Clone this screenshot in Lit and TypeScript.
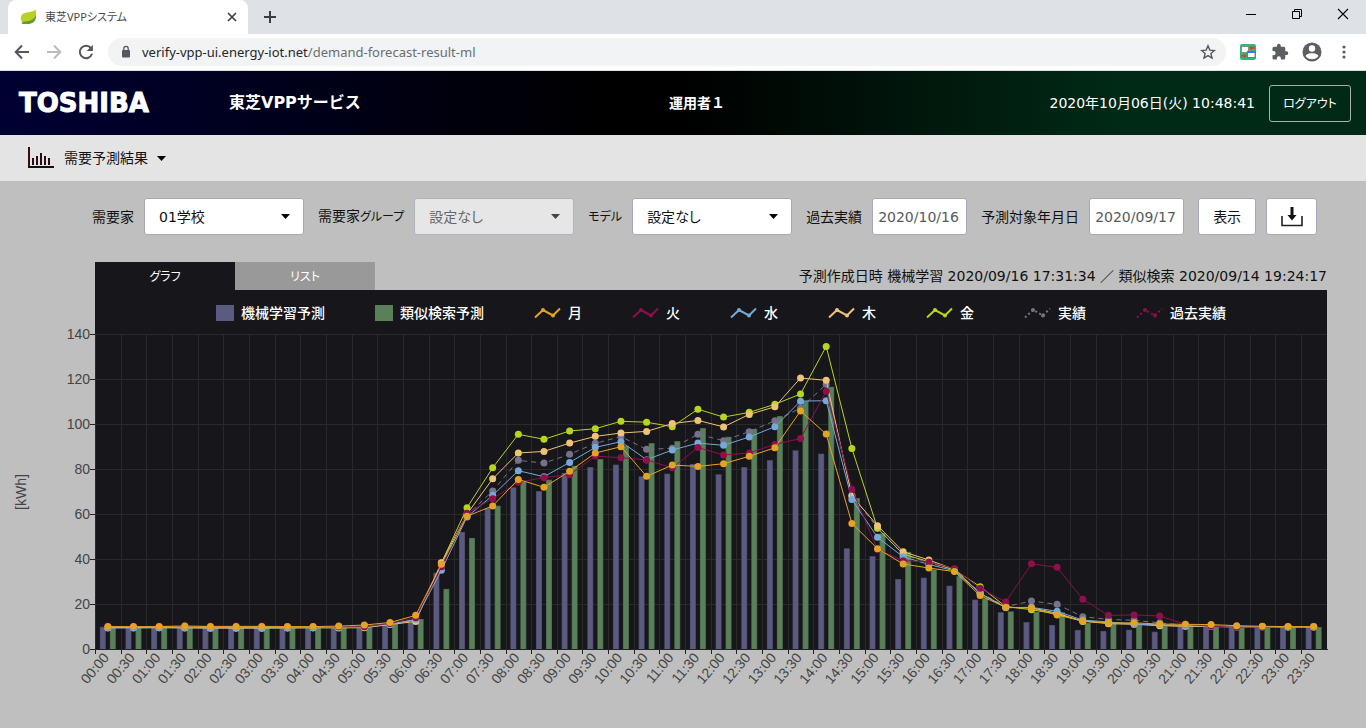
import { LitElement, html, svg, css } from "lit";
import { customElement } from "lit/decorators.js";

const ML = [
  9.9, 9.8, 9.8, 9.8, 9.7, 9.7, 9.6, 9.6, 9.6, 9.7, 9.9, 10.9, 12, 34, 52.2, 62.9, 72.1, 70.4, 78.5, 81.1, 82.2, 77,
  78.2, 82.5, 77.9, 81.1, 84.2, 88.6, 87.1, 44.9, 41.4, 31.2, 31.8, 28.2, 22, 16.4, 12, 10.7, 8.5, 8, 8.6, 7.7, 10.1,
  10, 9.9, 9.8, 9.8, 9.8,
];
const SIMILAR = [
  9.6, 9.6, 9.6, 9.5, 9.5, 9.5, 9.5, 9.5, 9.5, 9.6, 9.9, 11.3, 13.4, 26.8, 49.5, 63.9, 74.9, 75.5, 81.7, 84.7, 90.6,
  91.8, 92.7, 98.5, 94.6, 98.1, 103.9, 110.5, 116.9, 67.3, 51.6, 43.3, 35.5, 32.5, 22.6, 16.8, 16.6, 16.4, 11.6, 11.3,
  10.7, 10.1, 9.8, 9.8, 9.8, 9.7, 9.7, 9.8,
];
const ACTUAL = [
  9.8, 9.8, 9.8, 9.8, 9.7, 9.7, 9.7, 9.7, 9.7, 9.7, 10, 11.2, 13, 37, 59.7, 70.4, 84.1, 82.9, 86.8, 91.7, 94.7, 89,
  89.5, 95.7, 92.9, 96.9, 101.8, 107.3, 118, 68.6, 54, 42, 38.5, 35.3, 25.2, 18.9, 21.4, 19.9, 14.4, 13.2, 12.8, 11.7,
  10.5, 10.2, 10, 10, 10, 10,
];
const FRI = [
  9.6, 9.6, 9.6, 9.6, 9.5, 9.5, 9.5, 9.5, 9.5, 9.6, 9.8, 11.2, 12.9, 38.3, 63, 80.8, 95.7, 93.5, 97.2, 98.2, 101.5,
  101.1, 99.1, 106.9, 103.4, 105.5, 109.1, 113.7, 134.9, 89.4, 53.8, 42.3, 38.9, 35.2, 27.8, 18.9, 17.5, 15.5, 12.3,
  11.7, 11.3, 10.6, 10.3, 10.2, 9.9, 9.9, 9.9, 9.9,
];
const THU = [
  9.5, 9.5, 9.5, 9.4, 9.3, 9.3, 9.3, 9.4, 9.5, 9.4, 9.5, 10.9, 12.3, 38.5, 60.2, 75.9, 87.4, 88.1, 91.8, 94.8, 96.3,
  97, 100.5, 101.9, 99, 104.6, 108, 120.8, 119.8, 68.2, 55, 43.4, 39.7, 35.5, 24.8, 18.6, 18.4, 15.9, 12.5, 11.3, 11,
  10.4, 10.1, 10, 9.9, 9.9, 9.8, 9.8,
];
const WED = [
  9.4, 9.4, 9.5, 9.5, 9.5, 9.5, 9.4, 9.5, 9.5, 9.6, 9.8, 11, 13.2, 35.1, 58.9, 68.5, 79.5, 76.8, 83.2, 89.9, 92.4,
  84.4, 88.7, 91.8, 90.8, 94.5, 99.1, 110.5, 110.7, 66.6, 49.8, 41.1, 37.7, 34.8, 24.8, 18.4, 18.6, 16.8, 12.9, 12.1,
  11, 10.8, 10.3, 10.2, 9.7, 9.9, 9.8, 9.8,
];
const TUE = [
  10.1, 10, 10.1, 10.4, 10.2, 10.3, 10.3, 10, 10, 9.9, 9.9, 11.4, 13.9, 36.7, 60.5, 67, 74.3, 76.4, 77.7, 86, 85.3,
  84.3, 80.8, 89.8, 86.5, 87.4, 91.2, 93.8, 114.9, 71.2, 44.4, 39.4, 38.8, 35.8, 27.1, 21, 38, 36.4, 22.2, 15, 15.2,
  14.7, 11, 10.1, 9.7, 9.8, 10, 10,
];
const MON = [
  10, 10, 10, 10.2, 10, 10, 10, 10, 10, 10.2, 10.7, 11.8, 15, 37.8, 59.2, 63.8, 75.6, 72.1, 79.2, 87.4, 90.2, 77, 82,
  81.4, 82.6, 85.9, 89.7, 106.1, 95.8, 56, 44.7, 37.9, 36.1, 34.5, 23.8, 18.6, 18.3, 15.2, 12.5, 11.6, 11.7, 11.1, 11,
  10.9, 10.4, 10.1, 10, 10,
];

interface Series {
  color: string;
  values: number[];
  dashed?: boolean;
}

const SERIES: Series[] = [
  { color: "#75728a", values: ACTUAL, dashed: true },
  { color: "#b7d51c", values: FRI },
  { color: "#efc377", values: THU },
  { color: "#74a9d8", values: WED },
  { color: "#8f0f4b", values: TUE },
  { color: "#e3a424", values: MON },
];

const LEGEND = [
  { label: "機械学習予測", color: "#5b5a80", kind: "bar" },
  { label: "類似検索予測", color: "#5a8059", kind: "bar" },
  { label: "月", color: "#e3a424", kind: "line" },
  { label: "火", color: "#8f0f4b", kind: "line" },
  { label: "水", color: "#74a9d8", kind: "line" },
  { label: "木", color: "#efc377", kind: "line" },
  { label: "金", color: "#b7d51c", kind: "line" },
  { label: "実績", color: "#75728a", kind: "dash" },
  { label: "過去実績", color: "#8f0f4b", kind: "dash" },
];

/* Shared text stack */
const FONT = css`"DejaVu Sans", "Noto Sans CJK JP", sans-serif`;

@customElement("browser-chrome")
export class BrowserChrome extends LitElement {
  static styles = css`
    :host {
      display: block;
      font-family: "Noto Sans", "Noto Sans CJK JP", sans-serif;
    }
    button {
      border: 0;
      padding: 0;
      margin: 0;
      background: none;
      display: grid;
      place-items: center;
      font: inherit;
    }
    svg {
      display: block;
    }
    .strip {
      display: flex;
      align-items: stretch;
      height: 34px;
      padding-left: 8px;
      background: #dee1e6;
    }
    .tab {
      display: flex;
      align-items: center;
      box-sizing: border-box;
      width: 240px;
      padding: 0 10px 0 12px;
      gap: 8px;
      background: #fff;
      border-radius: 8px 8px 0 0;
      font-size: 11px;
      color: #45484c;
    }
    .tab-title {
      flex: 1;
      font-feature-settings: "palt";
      white-space: nowrap;
    }
    .new {
      width: 44px;
    }
    .window {
      display: flex;
      margin-left: auto;
    }
    .window button {
      width: 46px;
      padding-bottom: 6px;
    }
    .bar {
      display: flex;
      align-items: center;
      height: 36px;
      background: #fff;
      border-bottom: 1px solid #dcdee2;
    }
    .nav {
      display: flex;
      flex: none;
      padding: 0 6px;
    }
    .nav button {
      width: 32px;
    }
    .url {
      display: flex;
      align-items: center;
      flex: 1;
      height: 28px;
      padding: 0 10px 0 12px;
      border-radius: 14px;
      background: #f1f3f4;
      gap: 10px;
      font-size: 13px;
      color: #6b6e72;
    }
    .address {
      flex: 1;
      white-space: nowrap;
    }
    .host {
      color: #25272a;
    }
    .tools {
      display: flex;
      padding: 0 6px;
    }
    .tools button {
      width: 32px;
    }
  `;

  render() {
    return html`
      <div class="strip">
        <div class="tab">
          <svg width="17" height="16" viewBox="0 0 17 16">
            <path d="M15.5 0.5C16.8 5 16.2 11.5 12 13.5C9 15 4 14.6 2.6 13.6C0 11 0 6 4 4.2C8 2.6 12.5 3.6 15.5 0.5Z" fill="#bccf25" />
            <path d="M15.8 6C14.5 10.5 9.5 12.5 2.6 12.8L1.5 14.8C8 15.6 13 15 15 11.5C16 9.6 16.1 8 15.8 6Z" fill="#5f9c35" />
          </svg>
          <span class="tab-title">東芝VPPシステム</span>
          <button aria-label="閉じる">
            <svg width="12" height="12" viewBox="0 0 12 12" stroke="#3f4246" stroke-width="1.7"><path d="M2 2L10 10M10 2L2 10" /></svg>
          </button>
        </div>
        <button class="new" aria-label="新しいタブ">
          <svg width="14" height="14" viewBox="0 0 14 14" stroke="#3a3d41" stroke-width="2"><path d="M7 1V13M1 7H13" /></svg>
        </button>
        <div class="window">
          <button aria-label="最小化">
            <svg width="12" height="12" viewBox="0 0 12 12" stroke="#000" shape-rendering="crispEdges"><path d="M1 6.5H11" /></svg>
          </button>
          <button aria-label="元に戻す">
            <svg width="12" height="12" viewBox="0 0 12 12" fill="none" stroke="#000"><path d="M1.5 3.5H8.5V10.500H1.5ZM3.500 3.500V1.500H10.500V8.500H8.500" /></svg>
          </button>
          <button aria-label="ウィンドウを閉じる">
            <svg width="12" height="12" viewBox="0 0 12 12" stroke="#000" stroke-width="1.100"><path d="M1 1L11 11M11 1L1 11" /></svg>
          </button>
        </div>
      </div>
      <div class="bar">
        <div class="nav">
          <button aria-label="戻る">
            <svg width="16" height="16" viewBox="0 0 16 16" fill="none" stroke="#54575b" stroke-width="2"><path d="M15 8H2.500M8 1.500L1.700 8L8 14.500" /></svg>
          </button>
          <button aria-label="進む">
            <svg width="16" height="16" viewBox="0 0 16 16" fill="none" stroke="#b9bbbe" stroke-width="2"><path d="M1 8H13.500M8 1.500L14.300 8L8 14.500" /></svg>
          </button>
          <button aria-label="再読み込み">
            <svg width="16" height="16" viewBox="0 0 16 16"><path d="M13 4.200A6.200 6.200 0 1 0 14 9.800" fill="none" stroke="#54575b" stroke-width="2" /><path d="M14.900 0.800V7H8.700Z" fill="#54575b" /></svg>
          </button>
        </div>
        <div class="url">
          <svg width="12" height="14" viewBox="0 0 12 14"><rect x="2" y="5" width="8" height="7.500" rx="1" fill="#54575b" /><path d="M3.800 5.500V3.500A2.200 2.200 0 0 1 8.200 3.500V5.500" fill="none" stroke="#54575b" stroke-width="1.300" /></svg>
          <span class="address"><span class="host">verify-vpp-ui.energy-iot.net</span>/demand-forecast-result-ml</span>
          <svg width="16" height="16" viewBox="0 0 16 16" fill="none" stroke="#54575b" stroke-width="1.400"><path d="M8 1.800L9.800 6.100L14.400 6.500L10.900 9.500L12 14L8 11.600L4 14L5.100 9.500L1.600 6.500L6.200 6.100Z" /></svg>
        </div>
        <div class="tools">
          <button aria-label="拡張機能 1">
            <svg width="16" height="16" viewBox="0 0 16 16">
              <rect width="16" height="16" rx="2" fill="#2fb878" />
              <rect x="1.500" y="2.500" width="7" height="6" fill="#fff" stroke="#8a8a8a" />
              <rect x="7.500" y="7.500" width="7.500" height="6" fill="#fff" stroke="#777" />
              <rect x="7" y="7" width="8.500" height="2" fill="#3878ec" />
              <path d="M14.500 5V3.800H10.500M12 2.300L10.200 3.800L12 5.300M1.800 10.500V12H5.500M4 10.500L5.800 12L4 13.500" fill="none" stroke="#e0352b" stroke-width="1.200" />
            </svg>
          </button>
          <button aria-label="拡張機能">
            <svg width="18" height="18" viewBox="0 0 24 24"><path d="M20.500 11H19V7a2 2 0 0 0-2-2h-4V3.500a2.500 2.500 0 0 0-5 0V5H4a2 2 0 0 0-2 2v3.800h1.500a2.700 2.700 0 0 1 0 5.400H2V20a2 2 0 0 0 2 2h3.800v-1.500a2.700 2.700 0 0 1 5.400 0V22H17a2 2 0 0 0 2-2v-4h1.500a2.500 2.500 0 0 0 0-5Z" fill="#5b5e63" /></svg>
          </button>
          <button aria-label="プロフィール">
            <svg width="20" height="20" viewBox="0 0 20 20"><circle cx="10" cy="10" r="9.500" fill="#5b5e63" /><circle cx="10" cy="6.500" r="3.200" fill="#fff" /><path d="M3.600 14C4.500 11.800 8 11.300 10 11.300S15.500 11.800 16.400 14C15 16.200 12.500 17.200 10 17.200S5 16.200 3.600 14Z" fill="#fff" /></svg>
          </button>
          <button aria-label="メニュー">
            <svg width="4" height="16" viewBox="0 0 4 16" fill="#5b5e63"><circle cx="2" cy="3" r="1.600" /><circle cx="2" cy="8" r="1.600" /><circle cx="2" cy="13" r="1.600" /></svg>
          </button>
        </div>
      </div>
    `;
  }
}

@customElement("forecast-chart")
export class ForecastChart extends LitElement {
  static styles = css`
    :host {
      display: block;
    }
    .legend {
      display: flex;
      justify-content: center;
      align-items: center;
      box-sizing: border-box;
      gap: 50px;
      height: 45px;
      margin: 0 39px 0 95px;
      padding-left: 20px;
      background: #17161b;
      color: #fff;
      font-size: 14px;
      font-weight: 500;
      font-family: ${FONT};
    }
    .key {
      display: flex;
      align-items: center;
      gap: 7px;
      white-space: nowrap;
    }
    .legend svg {
      display: block;
    }
    .chart {
      display: block;
      width: 100%;
      height: auto;
      overflow: visible;
    }
    .axis {
      font-family: "Liberation Sans", sans-serif;
      font-size: 14px;
      fill: #444;
    }
  `;

  private left = 95.5;
  private right = 1327;
  private base = 314;
  private unit = 2.243;

  private get step() {
    return (this.right - this.left) / ML.length;
  }

  private cx(i: number) {
    return this.left + this.step * (i + 0.5) - 0.5;
  }

  private cy(v: number) {
    return this.base - v * this.unit;
  }

  private bar(i: number, v: number, offset: number, fill: string, edge: string) {
    const x = this.cx(i) + offset;
    const y = this.cy(v);
    return svg`<rect x=${x} y=${y} width="6" height=${this.base - y} fill=${edge} />
      <rect x=${x + 0.7} y=${y + 0.7} width="4.600" height=${this.base - y - 0.7} fill=${fill} />`;
  }

  private line(s: Series) {
    const points = s.values.map((v, i) => `${this.cx(i).toFixed(1)},${this.cy(v).toFixed(1)}`).join(" ");
    return svg`<polyline points=${points} fill="none" stroke=${s.color} stroke-width="1"
        stroke-dasharray=${s.dashed ? "5 4" : "none"} />
      ${s.values.map((v, i) => svg`<circle cx=${this.cx(i)} cy=${this.cy(v)} r="3.500" fill=${s.color} />`)}`;
  }

  private swatch(kind: string, color: string) {
    if (kind === "bar") {
      return html`<svg width="18" height="16"><rect width="18" height="16" fill=${color} /></svg>`;
    }
    return html`<svg width="27" height="14" viewBox="0 0 27 14">
      <path d="M1 11.500L9 4L19 9.500L26 2.500" fill="none" stroke=${color} stroke-width="2"
        stroke-dasharray=${kind === "dash" ? "2 2.500" : "none"} />
      <circle cx="9" cy="4" r="2" fill=${color} /><circle cx="19" cy="9.500" r="2" fill=${color} />
    </svg>`;
  }

  render() {
    const times = ML.map((_, i) => `${String(Math.floor(i / 2)).padStart(2, "0")}:${i % 2 ? "30" : "00"}`);
    const levels = [0, 20, 40, 60, 80, 100, 120, 140];
    const edges = ML.map((_, i) => Math.round(this.left + this.step * i - 0.5) + 0.5);
    return html`
      <div class="legend">
        ${LEGEND.map((l) => html`<span class="key">${this.swatch(l.kind, l.color)}<span>${l.label}</span></span>`)}
      </div>
      <svg class="chart" viewBox="0 0 1366 393" role="img" aria-label="需要予測結果">
        <rect x="95" y="0" width="1232" height="314" fill="#17161b" />
        ${edges.map(
          (x) => svg`<path d="M${x} 0V314" stroke="#2a2a2a" /><path d="M${x} 314V319" stroke="#222" />`,
        )}
        ${levels.map((v) => {
          const y = Math.round(this.cy(v) - 0.5) + 0.5;
          return svg`<path d="M95 ${y}H1327" stroke="#2a2a2a" /><path d="M90 ${y}H95" stroke="#222" />
            <text class="axis" x="90" y=${y + 4} text-anchor="end">${v}</text>`;
        })}
        ${ML.map((v, i) => this.bar(i, v, -8, "#5b5a80", "#4a4a6a"))}
        ${SIMILAR.map((v, i) => this.bar(i, v, 2, "#5a8059", "#49694a"))}
        ${SERIES.map((s) => this.line(s))}
        <path d="M90 314.500H1328" stroke="#222" />
        ${times.map((t, i) => {
          const x = this.cx(i);
          return svg`<text class="axis" text-anchor="end" transform="translate(${x + 2} 323) rotate(-50)">${t}</text>`;
        })}
        <text class="axis" text-anchor="middle" transform="translate(26 157) rotate(-90)">[kWh]</text>
      </svg>
    `;
  }
}

@customElement("app-root")
export class AppRoot extends LitElement {
  static styles = css`
    :host {
      display: block;
      min-height: 100vh;
      background: #bfbfbf;
      font-family: ${FONT};
      font-size: 14px;
      line-height: 20px;
      color: #111;
    }
    svg {
      display: block;
    }
    .kana {
      font-size: 12px;
      font-feature-settings: "palt";
    }
    .header {
      display: grid;
      grid-template-columns: 210px 440px 1fr auto auto;
      align-items: center;
      height: 64px;
      padding: 0 15px 0 19px;
      background: linear-gradient(90deg, #000033 0%, #000 45%, #000 50%, #002a16 82%);
      color: #fff;
    }
    .logo {
      font-size: 26px;
      font-weight: 700;
      line-height: 32px;
      -webkit-text-stroke: 1px #fff;
    }
    .title {
      font-size: 16px;
      font-weight: 700;
      margin: 0;
    }
    .user {
      font-weight: 700;
    }
    .logout {
      width: 82px;
      height: 37px;
      margin-left: 14px;
      padding: 0;
      border: 1px solid #a9b3ad;
      border-radius: 3px;
      background: none;
      color: #fff;
      font: inherit;
    }
    .menu {
      display: flex;
      align-items: center;
      height: 46px;
      padding-left: 28px;
      background: #e4e4e4;
    }
    .menu button {
      display: flex;
      align-items: center;
      gap: 9px;
      padding: 0;
      border: 0;
      background: none;
      color: #111;
      font: inherit;
    }
    .filters {
      display: flex;
      align-items: center;
      gap: 14px;
      padding: 17px 47px 27px 92px;
    }
    .field {
      display: flex;
      align-items: center;
      gap: 10px;
      white-space: nowrap;
    }
    .select {
      display: grid;
      align-items: center;
      width: 160px;
    }
    .select select,
    .select svg {
      grid-area: 1 / 1;
    }
    .select svg {
      justify-self: end;
      margin-right: 14px;
      pointer-events: none;
    }
    select,
    input,
    .action {
      box-sizing: border-box;
      height: 37px;
      margin: 0;
      border: 1px solid #a9a7ba;
      border-radius: 3px;
      background: #fff;
      color: #111;
      font: inherit;
    }
    select {
      appearance: none;
      width: 100%;
      padding: 0 14px;
      font-feature-settings: "palt";
    }
    select:disabled {
      background: #e6e6e6;
      border-color: #b3b1bd;
      color: #666;
      opacity: 1;
    }
    input {
      width: 95px;
      padding: 0 5px;
      color: #555a60;
    }
    .buttons {
      display: flex;
      gap: 10px;
    }
    .action {
      display: grid;
      place-items: center;
      padding: 0;
    }
    .show {
      width: 58px;
    }
    .download {
      width: 51px;
    }
    .tabs {
      display: flex;
      align-items: center;
      height: 28px;
      padding: 0 39px 0 95px;
    }
    .tab {
      width: 140px;
      height: 28px;
      padding: 0;
      border: 0;
      background: #999;
      color: #fff;
      font: inherit;
    }
    .active {
      background: #17161b;
    }
    .created {
      margin-left: auto;
      white-space: nowrap;
    }
  `;

  private caret(color: string) {
    return html`<svg width="9" height="5" viewBox="0 0 9 5"><path d="M0 0H9L4.500 5Z" fill=${color} /></svg>`;
  }

  private picker(id: string, label: unknown, value: string, disabled = false) {
    return html`<div class="field">
      <label for=${id}>${label}</label>
      <div class="select">
        <select id=${id} ?disabled=${disabled}><option>${value}</option></select>
        ${this.caret(disabled ? "#444" : "#000")}
      </div>
    </div>`;
  }

  private date(id: string, label: string, value: string) {
    return html`<div class="field">
      <label for=${id}>${label}</label>
      <input id=${id} type="text" .value=${value} />
    </div>`;
  }

  render() {
    return html`
      <browser-chrome></browser-chrome>
      <header class="header">
        <span class="logo">TOSHIBA</span>
        <h1 class="title">東芝VPPサービス</h1>
        <span class="user">運用者１</span>
        <span>2020年10月06日(火) 10:48:41</span>
        <button class="logout"><span class="kana">ログアウト</span></button>
      </header>
      <nav class="menu">
        <button>
          <svg width="27" height="22" viewBox="0 0 27 22" shape-rendering="crispEdges">
            <path d="M1 0V21" stroke="#3a0d12" stroke-width="2" />
            <path d="M0 20H26" stroke="#111" stroke-width="2" />
            <path d="M5 11V18M9 9V18M13 6V18M17 9V18M21 11V18" stroke="#2a0d14" stroke-width="2" />
          </svg>
          <span>需要予測結果</span>
          ${this.caret("#000")}
        </button>
      </nav>
      <main>
        <form class="filters">
          ${this.picker("consumer", "需要家", "01学校")}
          ${this.picker("group", html`需要家<span class="kana">グループ</span>`, "設定なし", true)}
          ${this.picker("model", html`<span class="kana">モデル</span>`, "設定なし")}
          ${this.date("past", "過去実績", "2020/10/16")}
          ${this.date("target", "予測対象年月日", "2020/09/17")}
          <div class="buttons">
            <button type="button" class="action show">表示</button>
            <button type="button" class="action download" aria-label="ダウンロード">
              <svg width="22" height="20" viewBox="0 0 22 20">
                <path d="M1 9V18.500H21V9" fill="none" stroke="#222" stroke-width="1.600" />
                <path d="M11 0V9" stroke="#111" stroke-width="3" />
                <path d="M6.500 8H15.500L11 13.500Z" fill="#111" />
              </svg>
            </button>
          </div>
        </form>
        <div class="tabs">
          <button class="tab active"><span class="kana">グラフ</span></button>
          <button class="tab"><span class="kana">リスト</span></button>
          <span class="created">予測作成日時 機械学習 2020/09/16 17:31:34 ／ 類似検索 2020/09/14 19:24:17</span>
        </div>
        <forecast-chart></forecast-chart>
      </main>
    `;
  }
}
